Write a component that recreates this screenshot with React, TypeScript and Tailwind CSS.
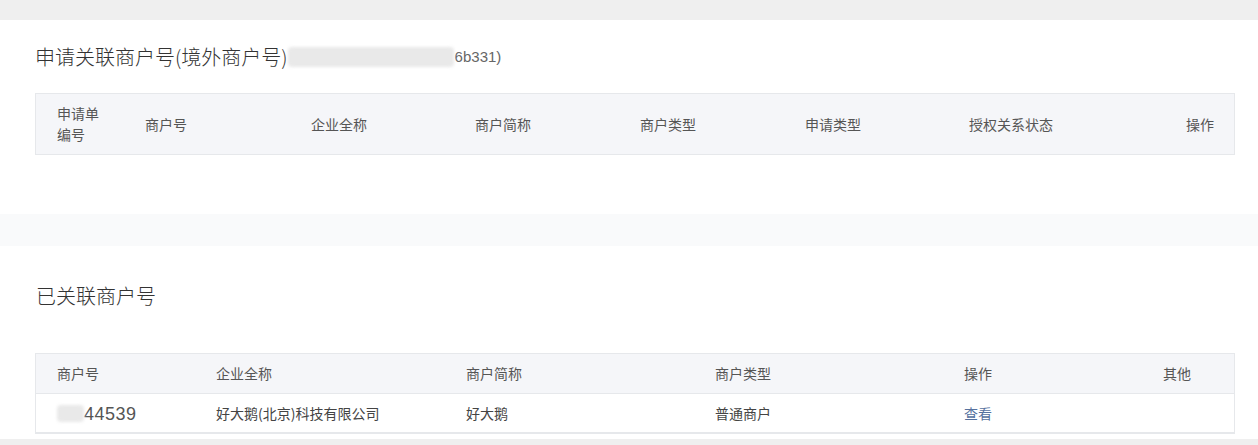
const font = { fontFamily: '"Noto Sans CJK SC", "Liberation Sans", sans-serif' }

const applyCols = ['申请单编号', '商户号', '企业全称', '商户简称', '商户类型', '申请类型', '授权关系状态', '操作']
const linkedCols = ['商户号', '企业全称', '商户简称', '商户类型', '操作', '其他']

function Redacted({ className }: { className: string }) {
  return <span className={`inline-block rounded-sm bg-[#e9e9e9] blur-[1.5px] ${className}`} />
}

export default function App() {
  return (
    <div className="w-[1258px] h-[445px] overflow-hidden bg-[#efefef]" style={font}>
      <div className="h-[20px]" />

      <section className="bg-white h-[194px] pl-[35px] pr-[23px]">
        <h2 className="pt-[10px] h-[64px] text-[20px] leading-[24px] font-light text-[#333] flex items-center">
          <span>申请关联商户号(境外商户号)</span>
          <Redacted className="w-[166px] h-[20px]" />
          <span className="text-[15px] text-[#666] ml-[1px]" style={{ fontFamily: '"Liberation Sans", sans-serif' }}>
            6b331)
          </span>
        </h2>

        <div className="mt-[9px] border border-[#e6e8eb] bg-[#f5f6f9] h-[62px] grid grid-cols-[88px_166px_164px_165px_165px_164px_1fr_auto] items-center text-[14px] leading-[21px] text-[#555]">
          {applyCols.map((c, i) => (
            <div
              key={c}
              className={i === 0 ? 'pl-[21px] w-[66px]' : i === applyCols.length - 1 ? 'pr-[20px] text-right' : 'pl-[21px]'}
            >
              {c}
            </div>
          ))}
        </div>
      </section>

      <div className="h-[32px] bg-[#f9fafb]" />

      <section className="bg-white h-[193px] pl-[35px] pr-[23px]">
        <h2 className="pt-[26px] h-[62px] text-[20px] leading-[24px] font-light text-[#333] flex items-end pl-[1px]">
          已关联商户号
        </h2>

        <div className="mt-[45px] border border-[#e6e8eb]">
          <div className="bg-[#f5f6f9] h-[40px] grid grid-cols-[160px_250px_249px_249px_199px_1fr] items-center text-[14px] text-[#555] border-b border-[#e6e8eb]">
            {linkedCols.map((c, i) => (
              <div key={c} className={i === 0 ? 'pl-[21px]' : 'pl-[20px]'}>
                {c}
              </div>
            ))}
          </div>
          <div className="bg-white h-[39px] grid grid-cols-[160px_250px_249px_249px_199px_1fr] items-center text-[14px] text-[#444] border-b border-[#e6e8eb]">
            <div className="pl-[21px] flex items-center">
              <Redacted className="w-[27px] h-[17px]" />
              <span
                className="text-[18px] leading-[20px] tracking-[0.5px] text-[#555] pt-[2px]"
                style={{ fontFamily: '"Liberation Sans", sans-serif' }}
              >
                44539
              </span>
            </div>
            <div className="pl-[20px]">好大鹅(北京)科技有限公司</div>
            <div className="pl-[20px]">好大鹅</div>
            <div className="pl-[20px]">普通商户</div>
            <div className="pl-[20px] text-[#56719e]">查看</div>
            <div />
          </div>
        </div>
      </section>
    </div>
  )
}
